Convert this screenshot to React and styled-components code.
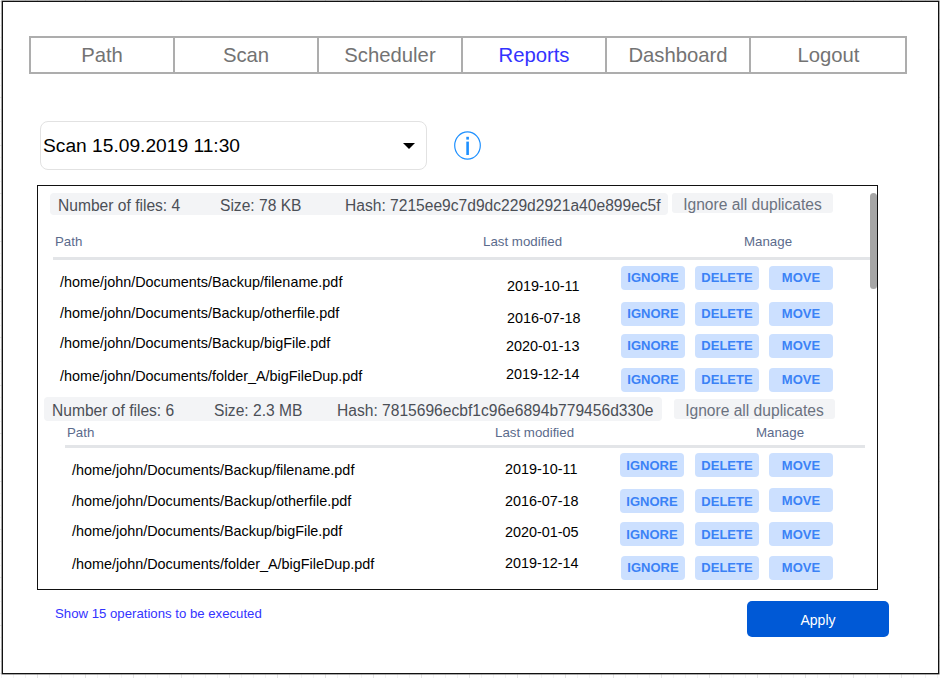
import styled, { createGlobalStyle } from "styled-components";

const GlobalStyle = createGlobalStyle`
  html, body {
    margin: 0;
    padding: 0;
    height: 678px;
    overflow: hidden;
    background-color: #fff;
    background-image:
      linear-gradient(to right, #e4e4e4 1px, transparent 1px),
      linear-gradient(to bottom, #e4e4e4 1px, transparent 1px),
      linear-gradient(to right, #f3f3f3 1px, transparent 1px),
      linear-gradient(to bottom, #f3f3f3 1px, transparent 1px);
    background-size: 48px 48px, 48px 48px, 12px 12px, 12px 12px;
    background-position: 37px 1px, 37px 1px, 1px 1px, 1px 1px;
    font-family: "Liberation Sans", Arial, sans-serif;
  }
`;

const Frame = styled.div`
  box-sizing: border-box;
  width: 937px;
  height: 673px;
  margin: 1px 0 0 2px;
  padding: 34px 0 0 26px;
  background: #fff;
  border: 1px solid #111;
  box-shadow: 0 0 0 0.5px #555;
`;

const Nav = styled.nav`
  display: flex;
  width: 878px;
  height: 38px;
  box-sizing: border-box;
  border: 2px solid #adadad;
`;

const NavItem = styled.a`
  flex: 0 0 ${(p) => (p.$last ? "155px" : "144px")};
  box-sizing: border-box;
  display: flex;
  align-items: center;
  justify-content: center;
  font-size: 20.3px;
  color: ${(p) => (p.$active ? "#3333ff" : "#737373")};
  border-right: ${(p) => (p.$last ? "none" : "2px solid #adadad")};
`;

const ScanBar = styled.div`
  display: flex;
  align-items: center;
  margin: 47px 0 0 11px;
  gap: 27px;
`;

const ScanSelect = styled.div`
  box-sizing: border-box;
  width: 387px;
  height: 49px;
  padding: 0 11px 0 2px;
  display: flex;
  align-items: center;
  justify-content: space-between;
  border: 1px solid #e2e2e2;
  border-radius: 8px;
  font-size: 19.2px;
  color: #000;
`;

const Caret = styled.span`
  width: 0;
  height: 0;
  border-left: 6px solid transparent;
  border-right: 6px solid transparent;
  border-top: 6px solid #000;
`;

const Panel = styled.section`
  position: relative;
  box-sizing: border-box;
  width: 841px;
  height: 405px;
  margin: 15px 0 0 8px;
  border: 1px solid #111;
  overflow: hidden;
`;

const Thumb = styled.div`
  position: absolute;
  top: 7px;
  right: 0;
  width: 7px;
  height: 96px;
  border-radius: 4px;
  background: #a6a6a6;
`;

const Group = styled.div`
  padding-left: ${(p) => p.$left}px;
  padding-top: ${(p) => p.$top}px;
`;

const SummaryLine = styled.div`
  display: flex;
  align-items: flex-start;
`;

const Summary = styled.div`
  box-sizing: border-box;
  display: flex;
  align-items: center;
  width: 618px;
  height: ${(p) => p.$h}px;
  padding: 4px 0 0 8px;
  border-radius: 4px;
  background: #f3f4f6;
  font-size: 15.6px;
  color: #4b4f56;
  white-space: nowrap;
`;

const Stat = styled.span`
  flex: 0 0 ${(p) => p.$w}px;
`;

const IgnoreAll = styled.button`
  box-sizing: border-box;
  width: 161px;
  height: 20px;
  margin: ${(p) => p.$top}px 0 0 ${(p) => p.$left}px;
  padding: 3px 0 0;
  border: none;
  border-radius: 3px;
  background: #f3f4f6;
  font-family: inherit;
  font-size: 15.6px;
  color: #6b7280;
`;

const TableHead = styled.div`
  box-sizing: border-box;
  display: flex;
  align-items: flex-end;
  width: ${(p) => p.$w}px;
  height: ${(p) => p.$h}px;
  margin-left: ${(p) => p.$left}px;
  padding: 0 0 ${(p) => p.$pb}px 2px;
  border-bottom: 3px solid #e3e5e8;
  font-size: 13.3px;
  color: #5b6b8c;
`;

const HeadCell = styled.span`
  flex: 0 0 ${(p) => p.$w}px;
`;

const RowGap = styled.div`
  height: ${(p) => p.$h}px;
`;

const Row = styled.div`
  display: flex;
  align-items: flex-start;
  height: ${(p) => p.$h}px;
  padding-left: ${(p) => p.$left}px;
  color: #000;
  font-size: 14.4px;
  line-height: 16px;
  white-space: nowrap;
`;

const PathCell = styled.div`
  flex: 0 0 ${(p) => p.$w}px;
  margin-top: ${(p) => p.$y}px;
`;

const DateCell = styled.div`
  flex: 0 0 ${(p) => p.$w}px;
  margin-top: ${(p) => p.$y}px;
  padding-left: ${(p) => p.$x || 0}px;
  box-sizing: border-box;
`;

const Actions = styled.div`
  display: flex;
  gap: 10px;
`;

const ActionButton = styled.button`
  box-sizing: border-box;
  width: 64px;
  height: 24px;
  margin-top: ${(p) => p.$y || 0}px;
  margin-right: ${(p) => p.$extra || 0}px;
  padding: 0 0 ${(p) => (p.$centered ? 0 : 1)}px;
  border: none;
  border-radius: 4px;
  background: #cce0ff;
  font-family: inherit;
  font-size: 13px;
  font-weight: 700;
  color: #3b82f6;
`;

const Footer = styled.div`
  display: flex;
  align-items: flex-start;
  margin: 11px 0 0 26px;
`;

const OperationsLink = styled.a`
  flex: 0 0 692px;
  margin-top: 5px;
  font-size: 13.2px;
  line-height: 15px;
  color: #3333ff;
`;

const ApplyButton = styled.button`
  width: 142px;
  height: 36px;
  padding: 1px 0 0;
  border: none;
  border-radius: 5px;
  background: #0059d6;
  font-family: inherit;
  font-size: 14px;
  color: #fff;
`;

const InfoIcon = () => (
  <svg width="28" height="29" viewBox="0 0 28 29" fill="none">
    <ellipse cx="13.5" cy="14.5" rx="12.8" ry="13.6" stroke="#1e90ff" strokeWidth="1.2" />
    <rect x="12.3" y="5.8" width="2.6" height="2.8" fill="#1e90ff" />
    <rect x="12.3" y="10.6" width="2.6" height="13.4" fill="#1e90ff" />
  </svg>
);

const navItems = ["Path", "Scan", "Scheduler", "Reports", "Dashboard", "Logout"];

const groups = [
  {
    left: 12,
    top: 7,
    summaryH: 22,
    stats: [
      ["Number of files: 4", 162],
      ["Size: 78 KB", 125],
      ["Hash: 7215ee9c7d9dc229d2921a40e899ec5f", 320],
    ],
    allTop: 0,
    allLeft: 4,
    head: { left: 3, w: 817, h: 45, pb: 8 },
    pathW: 446,
    pathLeft: 10,
    firstGap: 6,
    rows: [
      { h: 36, path: "/home/john/Documents/Backup/filename.pdf", date: "2019-10-11", py: 8, dy: 12, dx: 1, dw: 115 },
      { h: 32, path: "/home/john/Documents/Backup/otherfile.pdf", date: "2016-07-18", py: 3, dy: 8, dx: 1, dw: 115 },
      { h: 34, path: "/home/john/Documents/Backup/bigFile.pdf", date: "2020-01-13", py: 1, dy: 4, dw: 115 },
      { h: 29, path: "/home/john/Documents/folder_A/bigFileDup.pdf", date: "2019-12-14", py: 0, dy: -2, dw: 115 },
    ],
  },
  {
    left: 6,
    top: 0,
    summaryH: 24,
    stats: [
      ["Number of files: 6", 162],
      ["Size: 2.3 MB", 123],
      ["Hash: 7815696ecbf1c96e6894b779456d330e", 320],
    ],
    allTop: 2,
    allLeft: 12,
    head: { left: 21, w: 800, h: 27, pb: 5 },
    pathW: 433,
    pathLeft: 28,
    firstGap: 5,
    rows: [
      { h: 36, path: "/home/john/Documents/Backup/filename.pdf", date: "2019-10-11", py: 9, dy: 8, dw: 115, extra: 1, centered: true },
      { h: 33, path: "/home/john/Documents/Backup/otherfile.pdf", date: "2016-07-18", py: 4, dy: 4, dw: 115, extra: 1, moveY: -1, centered: true },
      { h: 34, path: "/home/john/Documents/Backup/bigFile.pdf", date: "2020-01-05", py: 1, dy: 2, dw: 115, extra: 1, centered: true },
      { h: 30, path: "/home/john/Documents/folder_A/bigFileDup.pdf", date: "2019-12-14", py: 0, dy: -1, dw: 116 },
    ],
  },
];

const App = () => {
  return (
    <>
      <GlobalStyle />
      <Frame>
        <Nav>
          {navItems.map((name, i) => (
            <NavItem key={name} $active={name === "Reports"} $last={i === navItems.length - 1}>
              {name}
            </NavItem>
          ))}
        </Nav>

        <ScanBar>
          <ScanSelect>
            Scan 15.09.2019 11:30
            <Caret />
          </ScanSelect>
          <InfoIcon />
        </ScanBar>

        <Panel>
          <Thumb />
          {groups.map((g) => (
            <Group key={g.stats[2][0]} $left={g.left} $top={g.top}>
              <SummaryLine>
                <Summary $h={g.summaryH}>
                  {g.stats.map(([text, w]) => (
                    <Stat key={text} $w={w}>
                      {text}
                    </Stat>
                  ))}
                </Summary>
                <IgnoreAll $top={g.allTop} $left={g.allLeft}>
                  Ignore all duplicates
                </IgnoreAll>
              </SummaryLine>
              <TableHead $left={g.head.left} $w={g.head.w} $h={g.head.h} $pb={g.head.pb}>
                <HeadCell $w={428}>Path</HeadCell>
                <HeadCell $w={261}>Last modified</HeadCell>
                <HeadCell $w={60}>Manage</HeadCell>
              </TableHead>
              <RowGap $h={g.firstGap} />
              {g.rows.map((r) => (
                <Row key={r.path} $h={r.h} $left={g.pathLeft}>
                  <PathCell $w={g.pathW} $y={r.py}>
                    {r.path}
                  </PathCell>
                  <DateCell $w={r.dw} $y={r.dy} $x={r.dx}>
                    {r.date}
                  </DateCell>
                  <Actions>
                    <ActionButton $extra={r.extra} $centered={r.centered}>IGNORE</ActionButton>
                    <ActionButton $centered={r.centered}>DELETE</ActionButton>
                    <ActionButton $y={r.moveY} $centered={r.centered}>MOVE</ActionButton>
                  </Actions>
                </Row>
              ))}
            </Group>
          ))}
        </Panel>

        <Footer>
          <OperationsLink>Show 15 operations to be executed</OperationsLink>
          <ApplyButton>Apply</ApplyButton>
        </Footer>
      </Frame>
    </>
  );
};

export default App;
